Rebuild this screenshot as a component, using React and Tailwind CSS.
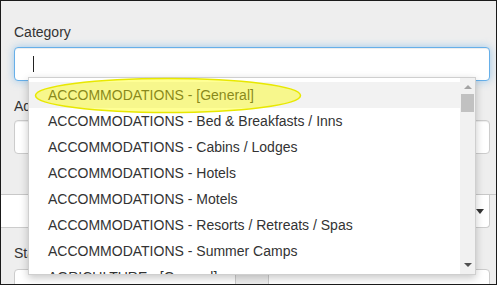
import React from 'react'

const options = [
  'ACCOMMODATIONS - [General]',
  'ACCOMMODATIONS - Bed & Breakfasts / Inns',
  'ACCOMMODATIONS - Cabins / Lodges',
  'ACCOMMODATIONS - Hotels',
  'ACCOMMODATIONS - Motels',
  'ACCOMMODATIONS - Resorts / Retreats / Spas',
  'ACCOMMODATIONS - Summer Camps',
  'AGRICULTURE - [General]',
]

const Caret = ({ className }) => (
  <svg width="8" height="5" viewBox="0 0 8 5" className={className}>
    <path d="M0 0 L8 0 L4 5 Z" fill="currentColor" />
  </svg>
)

const TextField = ({ className = '' }) => (
  <div
    className={`h-[34px] bg-white border border-[#cccccc] rounded-[4px] shadow-[inset_0_1px_1px_rgba(0,0,0,0.075)] ${className}`}
  />
)

const SelectField = ({ className = '' }) => (
  <div
    className={`h-[34px] bg-white border border-[#cccccc] rounded-[4px] flex items-center justify-end pr-[4px] text-[#333] ${className}`}
  >
    <Caret />
  </div>
)

const Dropdown = () => (
  <div className="absolute left-[27px] top-[76px] w-[448px] h-[198px] bg-white border border-[#cfcfcf] shadow-[0_3px_8px_rgba(0,0,0,0.22)] flex">
    <div className="flex-1 pt-[4px] overflow-hidden">
      {options.map((o, i) => (
        <div
          key={o}
          className={`h-[26px] leading-[26px] pl-[19px] whitespace-nowrap ${i === 0 ? 'bg-[#f2f2f2]' : ''}`}
        >
          {o}
        </div>
      ))}
    </div>
    <div className="w-[15px] bg-[#f1f1f1] flex flex-col items-center">
      <div className="h-[16px] flex items-center justify-center pt-[2px]">
        <svg width="8" height="4" viewBox="0 0 8 4">
          <path d="M4 0 L8 4 L0 4 Z" fill="#a3a3a3" />
        </svg>
      </div>
      <div className="w-[13px] h-[18px] bg-[#c1c1c1]" />
      <div className="flex-1" />
      <div className="h-[16px] flex items-center justify-center pb-[2px]">
        <svg width="8" height="4" viewBox="0 0 8 4">
          <path d="M0 0 L8 0 L4 4 Z" fill="#505050" />
        </svg>
      </div>
    </div>
  </div>
)

export default function App() {
  return (
    <div className="relative w-[497px] h-[285px] overflow-hidden border border-[#1a1a1a] bg-[#eeeeee] text-[14px] text-[#333] font-['Liberation_Sans',Arial,sans-serif]">
      <div className="pl-[13px] pr-[6px] pt-[21px] h-[194px] border-b border-[#c8c8c8]">
        <div className="h-[20px] leading-[20px] mb-[5px]">Category</div>
        <div className="h-[34px] bg-white border border-[#66afe9] rounded-[4px] shadow-[inset_0_1px_1px_rgba(0,0,0,0.075),0_0_8px_rgba(102,175,233,0.6)] flex items-center pl-[18px]">
          <span className="w-px h-[16px] bg-[#222]" />
        </div>
        <div className="h-[20px] leading-[20px] mt-[15px] mb-[4px]">Address</div>
        <TextField />
      </div>

      <div className="mr-[6px] h-[33px] bg-white border-b border-r border-[#cccccc] rounded-br-[4px] flex items-center justify-end pr-[5px]">
        <Caret />
      </div>

      <div className="pl-[13px] pr-[6px] pt-[15px]">
        <div className="h-[20px] leading-[20px] mb-[6px]">State</div>
        <div className="flex">
          <SelectField className="w-[222px] pr-[5px]" />
          <div className="w-[32px]" />
          <SelectField className="flex-1" />
        </div>
      </div>

      <Dropdown />

      <svg className="absolute left-[33px] top-[76px] pointer-events-none" width="268" height="37" viewBox="0 0 268 37">
        <ellipse cx="134" cy="18.5" rx="132.5" ry="17" fill="rgba(255,255,0,0.42)" stroke="#e8e800" strokeWidth="1.5" />
      </svg>
    </div>
  )
}
